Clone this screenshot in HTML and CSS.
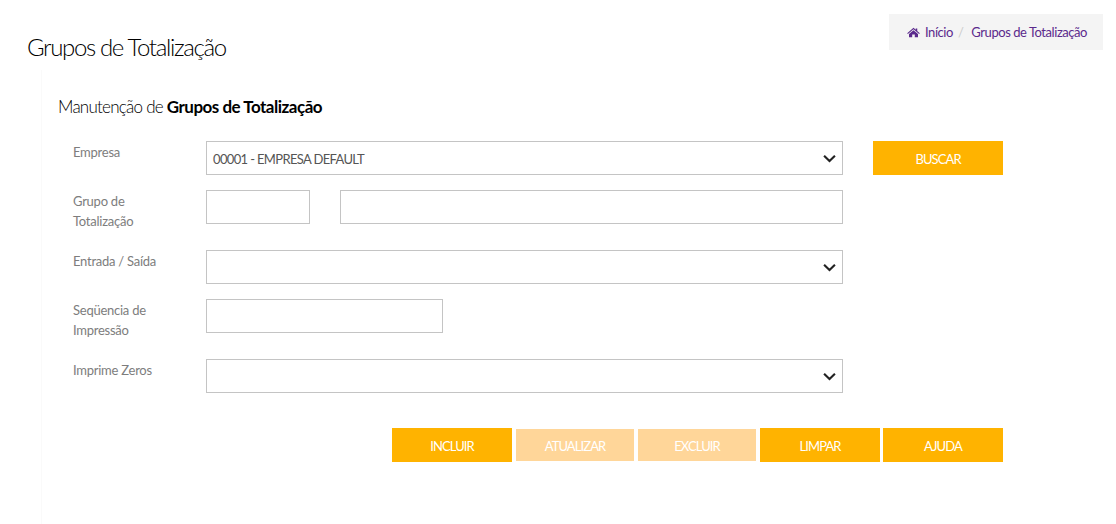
FILE: index.html
```html
<!DOCTYPE html>
<html lang="pt-BR">
<head>
  <meta charset="UTF-8" />
  <title>Grupos de Totalização</title>
  <link rel="stylesheet" href="styles.css">
</head>
<body>

<div class="page">
  <header class="page-header">
    <h1>Grupos de Totalização</h1>
    <nav class="breadcrumb">
      <svg class="home-icon" viewBox="0 0 26 20" aria-hidden="true">
        <path d="M13 0.5 L17.5 4.4 V2 H20.5 V7 L25.6 11.4 L24.2 13 L13 3.4 L1.8 13 L0.4 11.4 Z"/>
        <path d="M13 5.4 L22 13 V19.5 H15.6 V14 H10.4 V19.5 H4 V13 Z"/>
      </svg>
      <a href="#">Início</a>
      <span class="sep">/</span>
      <a href="#">Grupos de Totalização</a>
    </nav>
  </header>

  <section class="panel">
    <h2>Manutenção de <strong>Grupos de Totalização</strong></h2>

    <form class="form-grid">
      <label class="field-label">Empresa</label>
      <div class="field select-box">
        <span>00001 - EMPRESA DEFAULT</span>
        <svg class="chevron" viewBox="0 0 12 8"><path d="M1 1.5 L6 6.3 L11 1.5"/></svg>
      </div>
      <button type="button" class="btn btn-search">BUSCAR</button>

      <label class="field-label two-lines">Grupo de<br>Totalização</label>
      <div class="field-pair">
        <input type="text" class="field code-input" />
        <input type="text" class="field name-input" />
      </div>

      <label class="field-label">Entrada / Saída</label>
      <div class="field select-box">
        <span></span>
        <svg class="chevron" viewBox="0 0 12 8"><path d="M1 1.5 L6 6.3 L11 1.5"/></svg>
      </div>

      <label class="field-label two-lines">Seqüencia de<br>Impressão</label>
      <div class="field-pair">
        <input type="text" class="field seq-input" />
      </div>

      <label class="field-label">Imprime Zeros</label>
      <div class="field select-box">
        <span></span>
        <svg class="chevron" viewBox="0 0 12 8"><path d="M1 1.5 L6 6.3 L11 1.5"/></svg>
      </div>
    </form>

    <div class="actions">
      <button type="button" class="btn">INCLUIR</button>
      <button type="button" class="btn disabled">ATUALIZAR</button>
      <button type="button" class="btn disabled">EXCLUIR</button>
      <button type="button" class="btn">LIMPAR</button>
      <button type="button" class="btn">AJUDA</button>
    </div>
  </section>
</div>

</body>
</html>
```

FILE: styles.css
```css
:root {
  --accent: #ffb300;
  --accent-off: #ffd699;
  --purple: #5b2a8c;
  --line: #c4c4c4;
  --muted: #7d7d7d;
}

* {
  box-sizing: border-box;
}

body {
  margin: 0;
  background: #fff;
  color: #000;
  font-family: "Lato", "Liberation Sans", sans-serif;
  font-weight: 300;
}

.page {
  padding: 14px 13px 0 27px;
}

.page-header {
  display: flex;
  justify-content: space-between;
  align-items: flex-start;
}

h1 {
  margin: 17px 0 0;
  font-size: 24px;
  font-weight: 300;
  line-height: 32px;
  letter-spacing: -1.35px;
}

.breadcrumb {
  display: flex;
  align-items: center;
  width: 214px;
  height: 36px;
  padding-left: 18px;
  background: #f4f4f4;
  font-size: 13px;
  font-weight: 400;
  letter-spacing: -0.45px;
}

.breadcrumb a {
  color: var(--purple);
  text-decoration: none;
}

.home-icon {
  width: 13px;
  height: 11px;
  margin-right: 5px;
  fill: var(--purple);
}

.sep {
  margin: 0 8px 0 5px;
  color: #ccc;
}

.panel {
  height: 454px;
  margin: 7px 0 0 14px;
  padding-left: 16px;
  border-left: 1px solid #fafafa;
}

h2 {
  margin: 0;
  padding-top: 25px;
  font-size: 17px;
  font-weight: 300;
  line-height: 24px;
  letter-spacing: -0.75px;
}

h2 strong {
  font-weight: 700;
  letter-spacing: -0.5px;
}

.form-grid {
  display: grid;
  grid-template-columns: 133px 637px 130px;
  margin: 22px 0 0 15px;
  align-items: start;
}

.form-grid .btn-search {
  margin-left: 30px;
  width: 130px;
}

.field-label {
  grid-column: 1;
  padding-top: 1px;
  color: var(--muted);
  font-size: 13px;
  font-weight: 400;
  line-height: 20px;
  letter-spacing: -0.25px;
  min-height: 34px;
  margin-bottom: 15px;
}

.field-label.two-lines {
  min-height: 45px;
}

.field {
  height: 34px;
  border: 1px solid var(--line);
  background: #fff;
  border-radius: 0;
}

.select-box {
  grid-column: 2;
  display: flex;
  justify-content: space-between;
  align-items: center;
  padding: 1px 6px 0;
  color: #555;
  font-size: 13px;
  font-weight: 400;
  letter-spacing: -0.65px;
}

.chevron {
  width: 13px;
  height: 9px;
  fill: none;
  stroke: #222;
  stroke-width: 2;
}

.field-pair {
  grid-column: 2;
  display: flex;
  gap: 30px;
}

.code-input {
  width: 104px;
}

.name-input {
  flex: 1;
}

.seq-input {
  width: 237px;
}

.btn {
  width: 120px;
  height: 34px;
  padding: 2px 0 0;
  border: none;
  background: var(--accent);
  color: #fff;
  font-family: inherit;
  font-size: 13px;
  font-weight: 400;
  letter-spacing: -0.9px;
}

.btn.disabled {
  width: 118px;
  height: 32px;
  background: var(--accent-off);
}

.actions {
  display: flex;
  align-items: center;
  justify-content: flex-end;
  gap: 4px;
  width: 945px;
  margin: 20px 0 0 0;
}

.actions .btn:last-child {
  margin-left: -1px;
}
```
